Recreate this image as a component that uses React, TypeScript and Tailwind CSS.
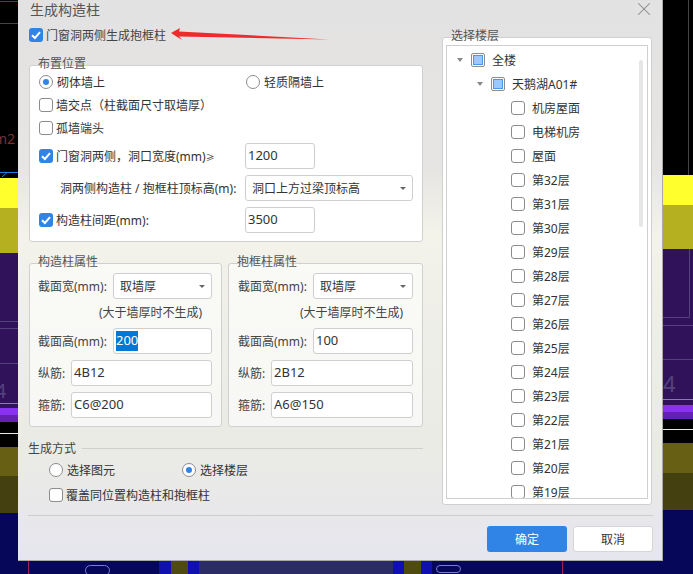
import { X } from 'lucide-react';
import type { ReactNode } from 'react';

const floors = ['机房屋面', '电梯机房', '屋面'];
for (let i = 32; i >= 19; i--) floors.push(`第${i}层`);

function Check({ on }: { on?: boolean }) {
  if (on) {
    return (
      <span className="flex h-[14px] w-[14px] shrink-0 items-center justify-center rounded-[3px] bg-[#2f84e5]">
        <svg viewBox="0 0 14 14" className="h-[14px] w-[14px]" fill="none">
          <path d="M3 7.2 L5.9 10 L11 4.2" stroke="#fff" strokeWidth="2" />
        </svg>
      </span>
    );
  }
  return <span className="h-[14px] w-[14px] shrink-0 rounded-[3px] border border-[#8c8c8c] bg-white" />;
}

function Partial() {
  return (
    <span className="flex h-[14px] w-[14px] shrink-0 items-center justify-center rounded-[2px] border border-[#8c8c8c] bg-white">
      <span className="h-[10px] w-[10px] border border-[#4a97ee] bg-[#9cc8ff]" />
    </span>
  );
}

function Radio({ on }: { on?: boolean }) {
  return (
    <span className="flex h-[14px] w-[14px] shrink-0 items-center justify-center rounded-full border border-[#8c8c8c] bg-white">
      {on && <span className="h-[6px] w-[6px] rounded-full bg-[#2f84e5]" />}
    </span>
  );
}

// text sits a pixel lower than the font's own centre
function Txt({ children, className = '' }: { children: ReactNode; className?: string }) {
  return <span className={`whitespace-nowrap pt-[2px] ${className}`}>{children}</span>;
}

function Field({ children, className }: { children: ReactNode; className: string }) {
  return (
    <div className={`flex h-[26px] items-center rounded-[3px] border border-[#cfcfcf] bg-white pl-[2px] text-[13px] text-[#333] ${className}`}>
      {children}
    </div>
  );
}

function Select({ label, className }: { label: string; className: string }) {
  return (
    <div className={`flex h-[26px] items-center justify-between rounded-[3px] border border-[#cfcfcf] bg-white pl-[6px] pr-[6px] text-[12px] text-[#333] ${className}`}>
      <Txt>{label}</Txt>
      <span className="h-0 w-0 border-x-[3px] border-t-[3px] border-x-transparent border-t-[#666]" />
    </div>
  );
}

function Legend({ children }: { children: ReactNode }) {
  return <span className="absolute -top-[10px] left-[8px] h-4 text-[12px] leading-4 text-[#555]">{children}</span>;
}

function Props({
  title,
  hintPad,
  high,
  main,
  hoop,
  className,
}: {
  title: string;
  hintPad: string;
  high: ReactNode;
  main: string;
  hoop: string;
  className: string;
}) {
  return (
    <div className={`relative flex h-[164px] flex-col rounded-[3px] border border-[#d0d0d0] bg-white/60 pr-[9px] pt-[9px] ${className}`}>
      <Legend>{title}</Legend>
      <div className="flex items-center">
        <Txt className="w-[75px] text-[12px] text-[#444]">截面宽(mm):</Txt>
        <Select label="取墙厚" className="flex-1" />
      </div>
      <div className={`mt-[5px] h-[18px] text-[12px] leading-[18px] text-[#444] ${hintPad}`}>(大于墙厚时不生成)</div>
      <div className="mt-[6px] flex items-center">
        <Txt className="w-[75px] text-[12px] text-[#444]">截面高(mm):</Txt>
        <Field className="flex-1">{high}</Field>
      </div>
      <div className="mt-[6px] flex items-center">
        <Txt className="w-[33px] text-[12px] text-[#444]">纵筋:</Txt>
        <Field className="flex-1">{main}</Field>
      </div>
      <div className="mt-[6px] flex items-center">
        <Txt className="w-[33px] text-[12px] text-[#444]">箍筋:</Txt>
        <Field className="flex-1">{hoop}</Field>
      </div>
    </div>
  );
}

function Band({ className }: { className: string }) {
  return <div className={className} />;
}

export default function App() {
  return (
    <div className="flex h-[574px] w-[693px] overflow-hidden bg-black font-['Noto_Sans','Noto_Sans_CJK_SC',sans-serif]">
      {/* left piece of the drawing */}
      <div className="relative flex w-[18px] shrink-0 flex-col overflow-hidden">
        <Band className="h-[178px] bg-black" />
        <Band className="h-[30px] bg-[#ffff2e]" />
        <Band className="h-[45px] bg-[#b5b020]" />
        <Band className="h-[155px] bg-[#2f1259]" />
        <Band className="h-[7px] bg-[#8a30f0]" />
        <Band className="h-[7px] bg-[#6420b4]" />
        <Band className="h-[25px] bg-black" />
        <Band className="h-[29px] bg-[#665f14]" />
        <Band className="h-[37px] bg-[#44400f]" />
        <Band className="flex-1 bg-[#07075a]" />
        <svg className="absolute inset-0 h-[574px] w-[18px]" fill="none">
          <path d="M0 1.5H18" stroke="#b01818" />
          <path d="M0 23.5H18" stroke="#444" />
          <path d="M0 172.5H7L2 177M7 172.5H18" stroke="#1f7be0" />
          <path d="M0 321.5H18M0 328.5H18M0 363.5H18" stroke="#54427f" />
          <path d="M0 403.5H18" stroke="#8c78b0" />
          <path d="M0 433.5H18" stroke="#e8e8e8" />
        </svg>
        <span className="absolute -left-[6px] top-[129px] text-[14px] leading-5 text-[#7a3030]">m2</span>
        <span className="absolute -left-[5px] top-[379px] text-[20px] leading-6 text-[#54427f]">4</span>
      </div>

      <div className="flex w-[645px] shrink-0 flex-col">
        <div className="relative flex h-[561px] flex-col border-b border-r border-[#a8a8a8] bg-[linear-gradient(180deg,#e3e2e2_0%,#e6e5e3_30%,#f3f3ea_42%,#eeeee8_60%,#ebebe5_78%,#e6e6ee_100%)]">
          <div className="flex h-[18px] items-center justify-between pl-3 pr-[7px]">
            <Txt className="text-[14px] leading-[18px] text-[#555]">生成构造柱</Txt>
            <X className="h-[22px] w-[22px] text-[#8a8a8a]" strokeWidth={1.1} />
          </div>

          <div className="flex h-[487px] pl-[11px]">
            <div className="flex w-[394px] flex-col">
              <div className="mt-[10px] flex h-[14px] items-center gap-[3px]">
                <Check on />
                <Txt className="text-[12px] text-[#444]">门窗洞两侧生成抱框柱</Txt>
              </div>

              <div className="relative mt-[23px] flex h-[177px] flex-col rounded-[3px] border border-[#d0d0d0] bg-white pl-[9px] pr-[9px] pt-[8px] text-[12px] text-[#333]">
                <Legend>布置位置</Legend>
                <div className="flex h-4 items-center">
                  <div className="flex w-[207px] items-center gap-1">
                    <Radio on />
                    <Txt>砌体墙上</Txt>
                  </div>
                  <div className="flex items-center gap-1">
                    <Radio />
                    <Txt>轻质隔墙上</Txt>
                  </div>
                </div>
                <div className="mt-[7px] flex h-4 items-center gap-[3px]">
                  <Check />
                  <Txt>墙交点（柱截面尺寸取墙厚）</Txt>
                </div>
                <div className="mt-[7px] flex h-4 items-center gap-[3px]">
                  <Check />
                  <Txt>孤墙端头</Txt>
                </div>
                <div className="mt-[7px] flex items-center">
                  <div className="flex w-[206px] items-center gap-[3px]">
                    <Check on />
                    <Txt>
                      门窗洞两侧，洞口宽度(mm)<span className="text-[9px]">≥</span>
                    </Txt>
                  </div>
                  <Field className="w-[70px]">1200</Field>
                </div>
                <div className="mt-[6px] flex items-center">
                  <Txt className="w-[206px] pl-[21px]">洞两侧构造柱 / 抱框柱顶标高(m):</Txt>
                  <Select label="洞口上方过梁顶标高" className="w-[168px]" />
                </div>
                <div className="mt-[6px] flex items-center">
                  <div className="flex w-[206px] items-center gap-[3px]">
                    <Check on />
                    <Txt>构造柱间距(mm):</Txt>
                  </div>
                  <Field className="w-[70px]">3500</Field>
                </div>
              </div>

              <div className="mt-[21px] flex gap-[6px]">
                <Props
                  title="构造柱属性"
                  hintPad="pl-[61px]"
                  high={<span className="bg-[#0078d7] text-white">200</span>}
                  main="4B12"
                  hoop="C6@200"
                  className="w-[193px] pl-[8px]"
                />
                <Props
                  title="抱框柱属性"
                  hintPad="pl-[62px]"
                  high="100"
                  main="2B12"
                  hoop="A6@150"
                  className="w-[195px] pl-[9px]"
                />
              </div>

              <div className="-ml-px mt-[13px] flex h-4 items-center gap-[6px] text-[12px] text-[#444]">
                <Txt>生成方式</Txt>
                <span className="h-px flex-1 bg-[#cfcfcf]" />
              </div>
              <div className="mt-[6px] flex h-4 items-center pl-[20px] text-[12px] text-[#333]">
                <div className="flex w-[133px] items-center gap-1">
                  <Radio />
                  <Txt>选择图元</Txt>
                </div>
                <div className="flex items-center gap-1">
                  <Radio on />
                  <Txt>选择楼层</Txt>
                </div>
              </div>
              <div className="mt-[9px] flex h-4 items-center gap-[3px] pl-[20px] text-[12px] text-[#333]">
                <Check />
                <Txt>覆盖同位置构造柱和抱框柱</Txt>
              </div>
            </div>

            <div className="ml-[19px] mt-[19px] h-[468px] w-[210px]">
              <div className="relative h-full rounded-[3px] border border-[#d0d0d0] bg-white px-[3px] pb-[5px] pt-[7px]">
                <Legend>选择楼层</Legend>
                <div className="relative h-full overflow-hidden border border-[#cfcfcf] pt-[2px] text-[12px] text-[#333]">
                  <div className="flex h-6 items-center pl-[10px]">
                    <span className="mr-2 h-0 w-0 border-x-[3.5px] border-t-[4px] border-x-transparent border-t-[#888]" />
                    <Partial />
                    <Txt className="ml-[7px]">全楼</Txt>
                  </div>
                  <div className="flex h-6 items-center pl-[30px]">
                    <span className="mr-2 h-0 w-0 border-x-[3.5px] border-t-[4px] border-x-transparent border-t-[#888]" />
                    <Partial />
                    <Txt className="ml-[7px]">天鹅湖A01#</Txt>
                  </div>
                  {floors.map((f) => (
                    <div key={f} className="flex h-6 items-center gap-[7px] pl-[64px]">
                      <Check />
                      <Txt>{f}</Txt>
                    </div>
                  ))}
                  <div className="absolute right-[4px] top-[14px] h-[167px] w-[4px] rounded-full bg-[#e6e6e6]" />
                </div>
              </div>
            </div>
          </div>

          <div className="ml-[10px] mr-[9px] mt-[10px] h-px bg-[#cdcdcd]" />
          <div className="mr-[9px] mt-[10px] flex justify-end gap-[6px] text-[12px]">
            <button className="h-[26px] w-[80px] rounded-[3px] bg-[#2f84e5] pt-[2px] text-white">确定</button>
            <button className="h-[26px] w-[80px] rounded-[3px] border border-[#d6d6d6] bg-white pt-[2px] text-[#333]">取消</button>
          </div>

          {/* red annotation arrow */}
          <svg className="pointer-events-none absolute left-0 top-0 h-[60px] w-[330px]" viewBox="0 0 330 60">
            <polygon points="153,33 162,28 161,31.5 311,39.5 161,36.5 164,40" fill="#f02a2a" />
          </svg>
        </div>

        {/* bottom piece of the drawing */}
        <div className="relative flex flex-1">
          <Band className="w-[141px] bg-[#07075a]" />
          <Band className="w-[12px] bg-[#1010b0]" />
          <Band className="w-[17px] bg-[#4f4a10]" />
          <Band className="w-[11px] bg-[#1010b0]" />
          <Band className="w-[194px] bg-[#2b2b66]" />
          <Band className="w-[11px] bg-[#1010b0]" />
          <Band className="w-[17px] bg-[#4f4a10]" />
          <Band className="w-[11px] bg-[#1010b0]" />
          <Band className="flex-1 bg-[#07075a]" />
          <svg className="absolute inset-0 h-[13px] w-[645px]" fill="none">
            <path d="M10.5 0V13M544.5 0V13" stroke="#a0205a" />
            <rect x="67.5" y="4.5" width="24" height="10" rx="5" stroke="#7b7bd0" />
            <rect x="418.5" y="4.5" width="24" height="7" rx="3.5" stroke="#7b7bd0" />
          </svg>
        </div>
      </div>

      {/* right piece of the drawing */}
      <div className="relative flex w-[30px] shrink-0 flex-col overflow-hidden">
        <Band className="h-[175px] bg-black" />
        <Band className="h-[30px] bg-[#ffff2e]" />
        <Band className="h-[44px] bg-[#b5b020]" />
        <Band className="h-[156px] bg-[#2f1259]" />
        <Band className="h-[7px] bg-[#8a30f0]" />
        <Band className="h-[7px] bg-[#6420b4]" />
        <Band className="h-[24px] bg-black" />
        <Band className="h-[30px] bg-[#665f14]" />
        <Band className="h-[37px] bg-[#44400f]" />
        <Band className="flex-1 bg-[#07075a]" />
        <svg className="absolute inset-0 h-[574px] w-[30px]" fill="none">
          <path d="M25.5 0V175" stroke="#444" />
          <path d="M26.5 249V317.5H0M0 325.5H30M0 359.5H30" stroke="#54427f" />
          <path d="M0 399.5H30" stroke="#8c78b0" />
          <path d="M0 429.5H30" stroke="#e8e8e8" />
        </svg>
        <span className="absolute left-0 top-[369px] text-[22px] leading-7 text-[#54427f]">4</span>
      </div>
    </div>
  );
}
